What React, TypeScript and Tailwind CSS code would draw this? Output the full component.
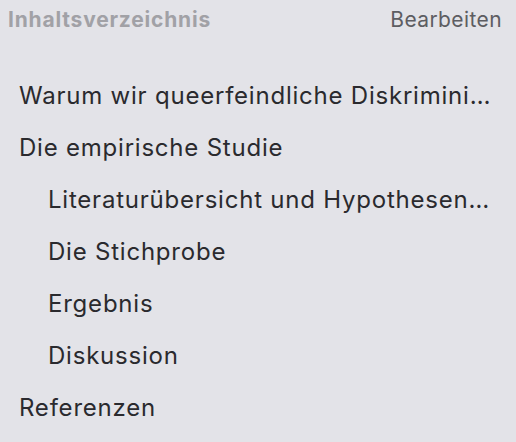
import React from 'react';

type Entry = { title: string; level: number };

const entries: Entry[] = [
  { title: 'Warum wir queerfeindliche Diskrimini…', level: 0 },
  { title: 'Die empirische Studie', level: 0 },
  { title: 'Literaturübersicht und Hypothesen…', level: 1 },
  { title: 'Die Stichprobe', level: 1 },
  { title: 'Ergebnis', level: 1 },
  { title: 'Diskussion', level: 1 },
  { title: 'Referenzen', level: 0 },
];

const App: React.FC = () => {
  return (
    <div
      className="w-[516px] h-[442px] overflow-hidden bg-[#e3e3e8] text-[#2a2a2e]"
      style={{ fontFamily: 'Inter, "Noto Sans", sans-serif' }}
    >
      <header className="flex items-center justify-between pl-2 pr-[14px] h-[40px]">
        <h2 className="text-[21px] font-bold tracking-[0.8px] text-[#a1a1a6]">Inhaltsverzeichnis</h2>
        <button className="text-[21px] tracking-[0.4px] text-[#5d5d62]">Bearbeiten</button>
      </header>
      <ul className="pt-[30px] pr-[20px]">
        {entries.map((e) => (
          <li
            key={e.title}
            className={`h-[52px] flex items-center text-[24px] tracking-[0.78px] whitespace-nowrap ${e.level ? 'pl-[48px]' : 'pl-[19px]'}`}
          >
            {e.title}
          </li>
        ))}
      </ul>
    </div>
  );
};

export default App;
